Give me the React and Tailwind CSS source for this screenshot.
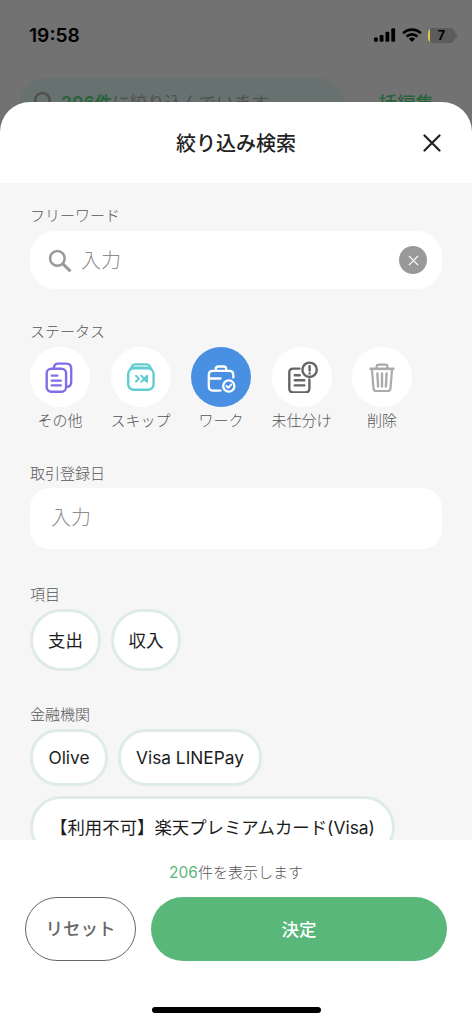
function SearchIcon({ className }) {
  return (
    <svg className={className} viewBox="0 0 24 24" fill="none" stroke="currentColor">
      <circle cx="9" cy="9" r="7" strokeWidth="2.4" />
      <path d="M14 14l7.6 7.4" strokeWidth="2.9" />
    </svg>
  );
}

function CopyIcon() {
  return (
    <svg className="w-8 h-8" viewBox="0 0 32 32" fill="none" stroke="#7f6fe6" strokeWidth="2.4" strokeLinecap="round" strokeLinejoin="round">
      <path d="M10 6.5C10.2 3.6 11.2 2.6 14 2.6h8.4c3.4 0 4.8 1.4 4.8 4.8v13.4c0 3.2-1 4.8-4 5" />
      <rect x="2.7" y="7.7" width="19.4" height="23" rx="4.5" />
      <path d="M7.8 14.6h5.5M7.8 19.6h9M7.8 24.4h9" />
    </svg>
  );
}

function SkipIcon() {
  return (
    <svg className="w-8 h-8" viewBox="0 0 32 32" fill="none" stroke="#62cdd0" strokeWidth="2.4" strokeLinecap="round" strokeLinejoin="round">
      <rect x="3.2" y="7.4" width="25.4" height="21.4" rx="5.5" />
      <path d="M5.600 8l1.600-2.800C7.700 4 8.500 3.400 9.800 3.400h12.200c1.300 0 2.100.6 2.600 1.800L26.200 8" />
      <path d="M8.500 6.200h14.800" strokeWidth="1.600" />
      <path d="M11 14.800l2.900 3-2.900 3M16.300 14.800l2.900 3-2.900 3M21.900 14.800l-2.700 3 2.700 3M22 14.800v6" strokeWidth="2" />
    </svg>
  );
}

function WorkIcon() {
  return (
    <svg className="w-8 h-8" viewBox="0 0 32 32" fill="none" stroke="#fff" strokeWidth="2.3" strokeLinecap="round" strokeLinejoin="round">
      <path d="M15.500 29.600H7.800c-2.900 0-4-1.200-4-4V14c0-2.800 1.200-4.200 4-4.200h16.500c2.900 0 4 1.400 4 4.200v2.500" />
      <path d="M10.800 9.500V8c0-1.700.8-2.500 2.500-2.500h5.400c1.700 0 2.500.8 2.500 2.500v1.500M4 17.500h11.500" />
      <circle cx="23.800" cy="25" r="5.600" />
      <path d="M21.400 25l1.900 1.900 3.100-3.500" strokeWidth="1.800" />
    </svg>
  );
}

function UnsortedIcon() {
  return (
    <svg className="w-8 h-8" viewBox="0 0 32 32" fill="none" stroke="#666" strokeWidth="2.4" strokeLinecap="round" strokeLinejoin="round">
      <path d="M13.500 7.600H7.200c-2.600 0-3.900 1.300-3.900 3.900v16.100c0 2.600 1.300 3.900 3.900 3.900h12.300c2.600 0 3.900-1.300 3.900-3.900V18.500" />
      <path d="M8.800 14.200h5M8.800 19.300h9.500M8.800 24.400h9.500" />
      <circle cx="23.600" cy="8.800" r="7.200" />
      <path d="M23.600 5.200v4.300M23.600 12.400v.1" strokeWidth="2.500" />
    </svg>
  );
}

function TrashIcon() {
  return (
    <svg className="w-8 h-8" viewBox="0 0 32 32" fill="none" stroke="#aaa" strokeWidth="2.200" strokeLinejoin="round">
      <path d="M3.600 7.800h24.800" strokeWidth="2.600" />
      <path d="M10.600 7.500V5.600c0-1.300.8-2 2-2h6.800c1.200 0 2 .7 2 2v1.900" />
      <path d="M5.900 8l1.600 19.300c.2 2 1 2.700 2.900 2.700h11.200c1.900 0 2.700-.7 2.900-2.700L26.100 8" />
      <path d="M11.400 12.500l.7 13M16 12.500v13M20.600 12.500l-.7 13" strokeWidth="2.400" strokeLinecap="round" />
    </svg>
  );
}

const statuses = [
  { label: "その他", icon: <CopyIcon /> },
  { label: "スキップ", icon: <SkipIcon /> },
  { label: "ワーク", icon: <WorkIcon />, active: true },
  { label: "未仕分け", icon: <UnsortedIcon /> },
  { label: "削除", icon: <TrashIcon /> },
];

function Label({ children }) {
  return <h2 className="pt-px h-5 text-[15px] leading-5 font-light text-[#555]">{children}</h2>;
}

function Chip({ children, className }) {
  return (
    <button
      className={`shrink-0 flex items-center justify-center border-3 border-[#deebea] bg-white whitespace-nowrap text-[#1c1c1c] [text-spacing-trim:space-all] ${className}`}
    >
      {children}
    </button>
  );
}

function StatusBar() {
  return (
    <div className="flex justify-between items-center h-[70px] pl-[29px] pr-[15px] text-black">
      <span className="text-[19.2px] font-semibold leading-6">19:58</span>
      <div className="flex items-center">
        <svg className="w-[22px] h-[14px]" viewBox="0 0 22 14">
          <rect x="0" y="9.500" width="3.800" height="4.200" rx="1" />
          <rect x="5.700" y="7" width="3.800" height="6.700" rx="1" />
          <rect x="11.500" y="3.800" width="3.800" height="9.900" rx="1" />
          <rect x="17.300" y="0.300" width="3.800" height="13.400" rx="1" />
        </svg>
        <svg className="w-5 h-[14px] ml-[6px]" viewBox="0 0 20 14" fill="none" stroke="#000" strokeWidth="2.700">
          <path d="M1.200 5.200C6.200.4 13.800.4 18.800 5.200" />
          <path d="M4.500 8.600c3.200-2.900 7.800-2.900 11 0" />
          <path d="M6.900 10.800c1.900-1.600 4.300-1.600 6.200 0L10 14z" fill="#000" stroke="none" />
        </svg>
        <div className="flex items-center ml-[6px]">
          <div className="w-[27px] h-[15px] rounded-[5px] bg-[#5c5c5c] overflow-hidden flex">
            <span className="w-[2px] bg-[#e5c44e]" />
            <span className="flex-1 pr-[2px] text-center text-[12.5px] leading-[15px] font-bold">7</span>
          </div>
          <div className="w-[2px] h-[5px] rounded-r-full bg-[#5c5c5c]" />
        </div>
      </div>
    </div>
  );
}

export default function App() {
  return (
    <div className="w-[472px] h-[1024px] overflow-hidden bg-[#727272] font-['Inter','Noto_Sans_CJK_JP',sans-serif]">
      {/* Dimmed page behind the sheet */}
      <div className="h-[102px]">
        <StatusBar />
        <div className="flex items-start pt-2 pl-5">
          <div className="flex items-start w-[324px] h-[52px] rounded-[26px] bg-[#677170] pl-[13px] pt-[13px] text-[#505050]">
            <SearchIcon className="w-[25px] h-[25px]" />
            <p className="ml-[3px] text-[17.5px] leading-6 whitespace-nowrap">
              <span className="text-[#28633c] font-semibold">206件</span>に絞り込んでいます
            </p>
          </div>
          <span className="ml-[16px] mt-[13px] text-[18.5px] leading-6 font-medium text-[#28633c]">一括編集</span>
        </div>
      </div>

      <div className="relative flex flex-col h-[922px] rounded-t-[30px] bg-white overflow-hidden">
        <header className="shrink-0 grid grid-cols-[1fr_auto_1fr] items-center h-[81px] px-[31px]">
          <span />
          <h1 className="pt-[2px] text-[20px] leading-7 font-medium text-[#222]">絞り込み検索</h1>
          <button className="justify-self-end" aria-label="閉じる">
            <svg className="w-[18px] h-[18px]" viewBox="0 0 18 18" stroke="#222" strokeWidth="2.200" strokeLinecap="round">
              <path d="M1.500 1.500l15 15M16.500 1.500l-15 15" />
            </svg>
          </button>
        </header>

        <main className="shrink-0 h-[657px] overflow-hidden bg-[#f6f6f6] pt-[22px] px-[30px]">
          <Label>フリーワード</Label>
          <div className="flex items-center mt-[6px] h-[58px] rounded-[25px] bg-white pl-[18px] pr-[15px]">
            <SearchIcon className="w-[25px] h-[25px] mt-[3px] text-[#999]" />
            <span className="flex-1 ml-[8px] pt-[2px] text-[20px] leading-7 font-light text-[#8c8c8c]">入力</span>
            <button className="flex items-center justify-center w-7 h-7 rounded-full bg-[#999]" aria-label="クリア">
              <svg className="w-[11px] h-[11px]" viewBox="0 0 12 12" stroke="#fff" strokeWidth="1.400">
                <path d="M1 1l10 10M11 1L1 11" />
              </svg>
            </button>
          </div>

          <div className="mt-8">
            <Label>ステータス</Label>
            <div className="flex mt-[6px] gap-[20.500px]">
              {statuses.map((s) => (
                <div key={s.label} className="flex flex-col items-center w-[60px]">
                  <div
                    className={`flex items-center justify-center w-[60px] h-[60px] rounded-full ${s.active ? "bg-[#4a90e2]" : "bg-white"}`}
                  >
                    {s.icon}
                  </div>
                  <span className="mt-[3px] h-5 text-[15px] leading-[21px] font-light whitespace-nowrap text-[#555]">
                    {s.label}
                  </span>
                </div>
              ))}
            </div>
          </div>

          <div className="mt-[33px]">
            <Label>取引登録日</Label>
            <div className="flex items-center mt-[5px] h-[61px] rounded-[20px] bg-white pl-[21px] pb-[1px] text-[20px] font-light text-[#8c8c8c]">
              入力
            </div>
          </div>

          <div className="mt-[35px]">
            <Label>項目</Label>
            <div className="flex gap-[10px] mt-[5px]">
              <Chip className="w-[71px] h-[62px] rounded-[31px] pt-[2px] text-[17.5px]">支出</Chip>
              <Chip className="w-[70px] h-[62px] rounded-[31px] pt-[2px] text-[17.5px]">収入</Chip>
            </div>
          </div>

          <div className="mt-[33px]">
            <Label>金融機関</Label>
            <div className="flex flex-wrap gap-[10px] mt-[5px]">
              <Chip className="w-[78px] h-[57px] rounded-[28px] text-[17.3px]">Olive</Chip>
              <Chip className="w-[144px] h-[57px] rounded-[28px] text-[17.3px]">Visa LINEPay</Chip>
              <Chip className="w-[365px] h-[62px] rounded-[31px] pt-[2px] text-[17.4px]">【利用不可】楽天プレミアムカード(Visa)</Chip>
            </div>
          </div>
        </main>

        <footer className="flex flex-col items-center pt-[22px]">
          <p className="h-5 pt-px text-[15px] leading-5 font-light text-[#555]">
            <span className="text-[15.500px] font-normal text-[#5ab77a]">206</span>件を表示します
          </p>
          <div className="flex gap-[15px] w-full mt-[15px] px-[25px]">
            <button className="w-[111px] h-16 rounded-full border border-[#666] pt-px text-[17.500px] font-medium text-[#666]">
              リセット
            </button>
            <button className="flex-1 h-16 rounded-full bg-[#5ab77a] pt-[2px] text-[17.500px] font-medium text-white">
              決定
            </button>
          </div>
          <div className="mt-[46px] w-[169px] h-[6px] rounded-full bg-black" />
        </footer>
      </div>
    </div>
  );
}
